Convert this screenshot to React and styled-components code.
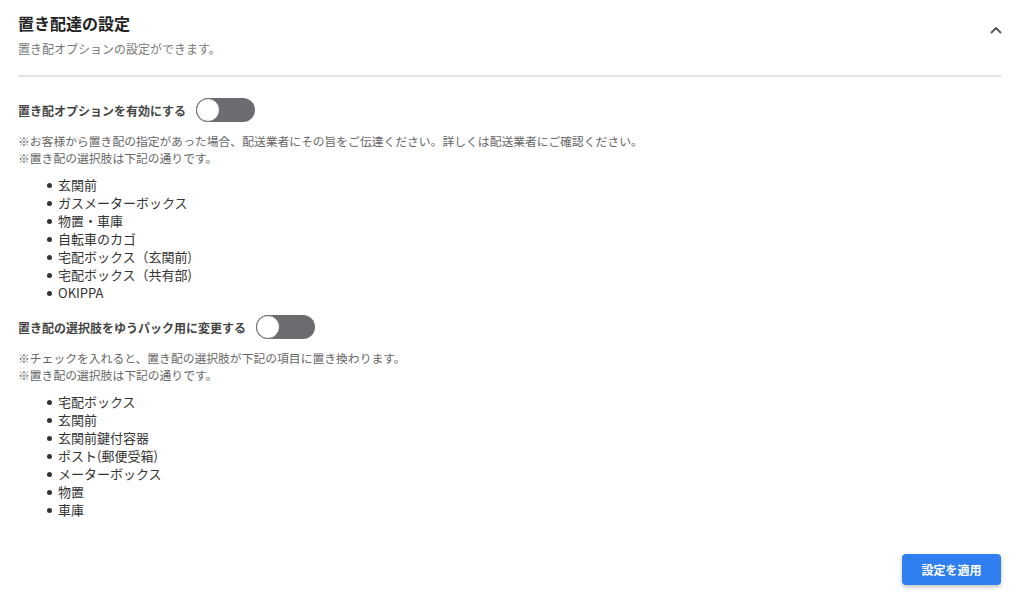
import styled, { createGlobalStyle } from 'styled-components'

const GlobalStyle = createGlobalStyle`
  body {
    margin: 0;
    background: #fff;
    font-family: "Noto Sans CJK JP", "Noto Sans", sans-serif;
    color: #333;
  }
`

const Page = styled.div`
  width: 1024px;
  height: 601px;
  box-sizing: border-box;
  padding: 12px 23px 0 18px;
  display: flex;
  flex-direction: column;
`

const Header = styled.header`
  display: flex;
  justify-content: space-between;
  align-items: flex-start;
  padding-bottom: 18px;
  border-bottom: 2px solid #e3e3e3;
`

const Title = styled.h1`
  margin: 0;
  font-size: 16px;
  line-height: 22px;
  font-weight: 700;
  color: #222;
`

const Subtitle = styled.p`
  margin: 7px 0 0;
  font-size: 12px;
  line-height: 16px;
  color: #777;
`

const Chevron = styled.button`
  border: 0;
  background: none;
  padding: 0;
  margin: 10px -3px 0 0;
  width: 16px;
  height: 16px;
  display: flex;
  align-items: center;
  justify-content: center;
`

const Section = styled.section`
  padding-top: ${p => p.$top}px;
`

const ToggleRow = styled.div`
  display: flex;
  align-items: center;
  gap: 10px;
`

const Label = styled.span`
  font-size: 12px;
  font-weight: 700;
  color: #444;
`

const Track = styled.span`
  width: 59px;
  height: 24px;
  border-radius: 12px;
  background: #6b6b70;
  display: flex;
  align-items: center;
  box-sizing: border-box;
`

const Knob = styled.span`
  width: 24px;
  height: 24px;
  border-radius: 50%;
  background: #fff;
  border: 1px solid #6b6b70;
  box-sizing: border-box;
`

const Notes = styled.div`
  margin-top: 10px;
  font-size: 11.8px;
  line-height: 17px;
  color: #666;
`

const List = styled.ul`
  margin: 10px 0 0;
  padding-left: 40px;
  list-style: none;
  font-size: 13px;
  line-height: 18px;
  color: #333;
`

const Item = styled.li`
  position: relative;

  &::before {
    content: '';
    position: absolute;
    left: -11px;
    top: 7px;
    width: 5px;
    height: 5px;
    border-radius: 50%;
    background: #333;
  }
`

const Footer = styled.div`
  margin-top: auto;
  padding-bottom: 16px;
  display: flex;
  justify-content: flex-end;
`

const ApplyButton = styled.button`
  width: 99px;
  height: 31px;
  border: 0;
  border-radius: 4px;
  background: #2f7ff0;
  color: #fff;
  font-family: inherit;
  font-size: 12px;
  font-weight: 700;
  box-shadow: 0 2px 4px rgba(0, 0, 0, 0.25);
`

const Toggle = () => (
  <Track>
    <Knob />
  </Track>
)

const firstOptions = [
  '玄関前',
  'ガスメーターボックス',
  '物置・車庫',
  '自転車のカゴ',
  '宅配ボックス（玄関前)',
  '宅配ボックス（共有部)',
  'OKIPPA',
]

const yuOptions = [
  '宅配ボックス',
  '玄関前',
  '玄関前鍵付容器',
  'ポスト(郵便受箱)',
  'メーターボックス',
  '物置',
  '車庫',
]

const App = () => {
  return (
    <Page>
      <GlobalStyle />
      <Header>
        <div>
          <Title>置き配達の設定</Title>
          <Subtitle>置き配オプションの設定ができます。</Subtitle>
        </div>
        <Chevron aria-label="閉じる">
          <svg width="12" height="8" viewBox="0 0 12 8" fill="none">
            <path d="M1.5 6.5 6 2l4.5 4.5" stroke="#555" strokeWidth="1.8" strokeLinecap="round" strokeLinejoin="round" />
          </svg>
        </Chevron>
      </Header>

      <Section $top={21}>
        <ToggleRow>
          <Label>置き配オプションを有効にする</Label>
          <Toggle />
        </ToggleRow>
        <Notes>
          <div>※お客様から置き配の指定があった場合、配送業者にその旨をご伝達ください。詳しくは配送業者にご確認ください。</div>
          <div>※置き配の選択肢は下記の通りです。</div>
        </Notes>
        <List>
          {firstOptions.map(o => <Item key={o}>{o}</Item>)}
        </List>
      </Section>

      <Section $top={13}>
        <ToggleRow>
          <Label>置き配の選択肢をゆうパック用に変更する</Label>
          <Toggle />
        </ToggleRow>
        <Notes>
          <div>※チェックを入れると、置き配の選択肢が下記の項目に置き換わります。</div>
          <div>※置き配の選択肢は下記の通りです。</div>
        </Notes>
        <List>
          {yuOptions.map(o => <Item key={o}>{o}</Item>)}
        </List>
      </Section>

      <Footer>
        <ApplyButton>設定を適用</ApplyButton>
      </Footer>
    </Page>
  )
}

export default App
